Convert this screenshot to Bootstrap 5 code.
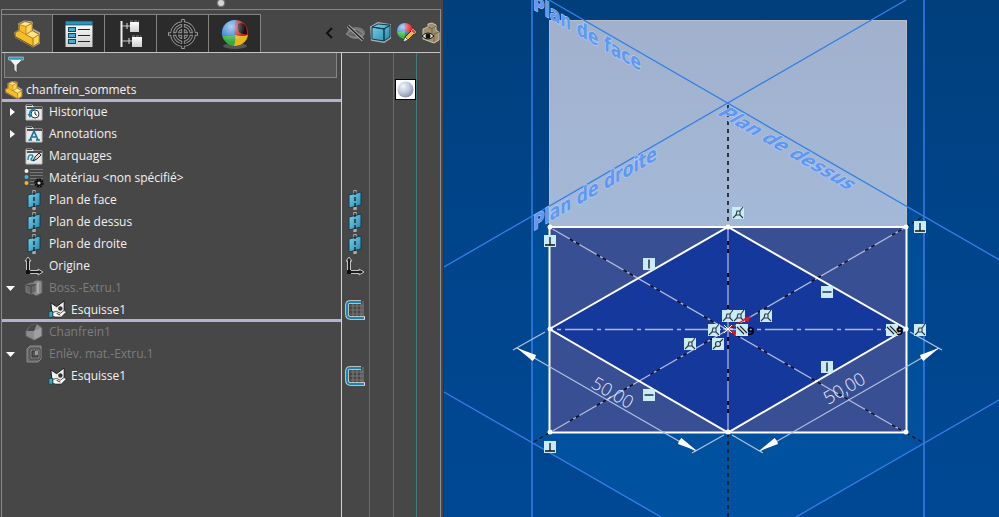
<!DOCTYPE html>
<html lang="fr">
<head>
<meta charset="utf-8">
<meta name="viewport" content="width=device-width, initial-scale=1">
<title>chanfrein_sommets</title>
<link href="https://cdn.jsdelivr.net/npm/bootstrap@5.3.0/dist/css/bootstrap.min.css" rel="stylesheet">
<style>
  body { font-family: "Open Sans", "Noto Sans", sans-serif; font-size: 12px; line-height: 16px; background: #474747; color: #f2f2f2; }
  svg { display: block; flex: none; }
  button { font: inherit; color: inherit; }
  .side-panel { flex: 0 0 444px; background: #474747; border-right: 1px solid #2f3438; padding: 0 2px 0 1px; }
  .top-strip { height: 10px; border-bottom: 1px solid #858585; }
  .grip { width: 6px; height: 6px; border-radius: 50%; background: #d6d6d6; box-shadow: 0 0 1px 1px #808080; }
  .panel-frame { border-left: 1px solid #8a8a8a; border-right: 1px solid #8f8f8f; }
  .tab-strip { padding-top: 4px; border-bottom: 1px solid #c4c4c4; }
  .tool-tab { width: 52px; height: 38px; padding: 0; border: 1px solid #858585; border-width: 1px 1px 0 0; background: #2b2b2b; display: flex; align-items: center; justify-content: center; }
  .tool-tab.active { width: 51px; background: #474747; }
  .icon-btn { padding: 0; border: 0; background: none; }
  .tree-pane { flex: 1 1 0; border-right: 1px solid #d5d5d5; min-width: 0; }
  .filter-box { height: 25px; margin: 0 4px 2px 2px; background: #555; border: 1px solid #858585; border-top: 0; padding-left: 3px; }
  .filter-box input { background: none; border: 0; outline: 0; color: inherit; min-width: 0; }
  .tree-row { height: 22px; padding-bottom: 2px; white-space: nowrap; }
  .tree-row.ruled { padding-bottom: 0; border-bottom: 3px solid #b4b2cf; }
  .toggle { width: 16px; height: 18px; flex: none; display: flex; align-items: center; padding-left: 4px; }
  .tree-icon { width: 22px; margin: 0 4px 0 5px; flex: none; display: flex; justify-content: center; }
  .child .tree-icon { margin: 0 3px 0 28px; }
  .root .tree-icon { margin: 0 2px 0 0; }
  .off { color: #7d7d7d; }
  .columns-pane { flex: 0 0 98px; }
  .columns-row { height: 22px; }
  .columns-row span { flex: 1 1 24px; border-left: 1px solid #3f7c7a; padding-bottom: 3px; display: flex; align-items: center; justify-content: center; }
  .columns-row span:first-child { flex: 0 0 27px; border-left: 0; padding-right: 2px; }
  .columns-row.head { height: 27px; }
  .swatch { width: 21px; height: 21px; background: #fff; border: 1px solid #000; }
  .scene { flex: 1 1 0; min-width: 0; background: linear-gradient(#003f7c, #00458c 50%, #004894); }
  .plane-name { font-family: "DejaVu Sans", sans-serif; font-weight: 700; font-size: 18px; fill: #5f98f2; stroke: #bdd0f0; stroke-width: 1px; paint-order: stroke; }
  .dim-value { font-family: "Open Sans", sans-serif; font-weight: 300; font-size: 18px; fill: #e6ebf8; }
  .nine { font-family: "DejaVu Sans", sans-serif; font-weight: 700; font-size: 11px; fill: #000; }
</style>
<script src="https://cdn.jsdelivr.net/npm/bootstrap@5.3.0/dist/js/bootstrap.bundle.min.js"></script>
</head>
<body class="vh-100 d-flex overflow-hidden">

<svg width="0" height="0" class="position-absolute" aria-hidden="true">
  <defs>
    <linearGradient id="gBlue" x1="0" y1="0" x2="1" y2="1"><stop offset="0" stop-color="#7fd0ea"/><stop offset="1" stop-color="#2687ad"/></linearGradient>
    <linearGradient id="gWhite" x1="0" y1="0" x2="0" y2="1"><stop offset="0" stop-color="#fff"/><stop offset="1" stop-color="#cfcfcf"/></linearGradient>
    <radialGradient id="gBall" cx=".35" cy=".3" r=".75"><stop offset="0" stop-color="#f1f4fb"/><stop offset=".5" stop-color="#c3cbdf"/><stop offset="1" stop-color="#8790a8"/></radialGradient>
    <radialGradient id="gShine" cx=".35" cy=".25" r=".6"><stop offset="0" stop-color="#fff" stop-opacity=".65"/><stop offset="1" stop-color="#fff" stop-opacity="0"/></radialGradient>
    <symbol id="part" viewBox="0 0 28 28">
      <path d="M1 13 5 10.500 5 4 11 1 18 1.500 20 3V9L27 13V24L20 28 2 18Z" fill="#d5d5d5" opacity=".7"/>
      <path d="M2 13 6 11V5L12 2 19 4V11L26 15V23L20 27 2 17Z" fill="#f6bd2b" stroke="#6b4c0a"/>
      <path d="M6 5 12 2 19 4 13 7ZM13 15 19 11 26 15 20 19Z" fill="#ffe48b" stroke="#a5761a" stroke-width=".7"/>
      <path d="M13 7 19 4V11L13 15ZM20 19 26 15V23L20 27Z" fill="#ffd75a" stroke="#a5761a" stroke-width=".7"/>
      <path d="M2 13 6 11 13 15 20 19V27" fill="none" stroke="#b98415" stroke-width=".8"/>
    </symbol>
    <symbol id="plane" viewBox="0 0 16 20">
      <path d="M8 1V19" stroke="#aaa" stroke-width="3.500" stroke-linecap="round"/>
      <path d="M2 5 14 2V15L2 18Z" fill="url(#gBlue)" stroke="#0c4157"/>
      <path d="M8 1V19" stroke="#111" stroke-width="1.200" stroke-dasharray="4 2"/>
    </symbol>
    <symbol id="origin" viewBox="0 0 20 20">
      <path d="M4 17V4M4 16H17" fill="none" stroke="#c6c6c6" stroke-width="4"/>
      <path d="M4 1 7 5H1ZM19 16 14 13V19Z" fill="#222" stroke="#c6c6c6"/>
      <path d="M4 16V4M3 16H17" fill="none" stroke="#1c1c1c" stroke-width="2"/>
      <rect x="2" y="14" width="4" height="4" fill="#111"/>
    </symbol>
    <symbol id="folder" viewBox="0 0 18 18">
      <path d="M1 17V2H7L9 4H17V17Z" fill="#e9e9e9" stroke="#bdbdbd"/><path d="M2 5H17" stroke="#222" stroke-width="1.500"/><path d="M1.500 2.500H7" stroke="#444"/>
    </symbol>
    <symbol id="sketch" viewBox="0 0 20 20">
      <path d="M3 3 9 7 17 1V13L10 16 4 12Z" fill="#f1f1f1" stroke="#161616"/>
      <circle cx="13" cy="9" r="2.300" fill="#333"/>
      <path d="M5 13 9 12 13 14 17 11 19 13 14 18 8 18 5 17Z" fill="#fff" stroke="#222" stroke-width=".8"/>
      <path d="M9 14 13 16" stroke="#222"/><rect x="1" y="12" width="4" height="6" fill="#3aa3c8" stroke="#123f54" stroke-width=".7"/>
    </symbol>
    <symbol id="sketchGrid" viewBox="0 0 20 20">
      <path d="M8 4V17M12 4V17M16 4V17M18 1V17M5 6H19M5 10H19M5 14H19" stroke="#757575" stroke-width="1.200"/>
      <path d="M16 2H5Q2 2 2 5V14Q2 18 6 18H20" fill="none" stroke="#dfe6e8" stroke-width="3.500"/>
      <path d="M16 2H5Q2 2 2 5V14Q2 18 6 18H19" fill="none" stroke="#1c83ab" stroke-width="2"/>
    </symbol>
    <g id="tile"><rect x="-6" y="-6" width="12" height="12" fill="#c9ecfb"/></g>
    <g id="perp"><use href="#tile"/><path d="M0-4V4M-5 4H5" stroke="#111" stroke-width="1.300"/></g>
    <g id="vert"><use href="#tile"/><path d="M0-4.500V4.500" stroke="#111" stroke-width="1.300"/></g>
    <g id="horiz"><use href="#tile"/><path d="M-4.500 0H4.500" stroke="#111" stroke-width="1.300"/></g>
    <g id="coin"><use href="#tile"/><path d="M-5 5-2 2M2-2 5-6M-2 2-1-2H2V2ZM2 2 5 5" fill="none" stroke="#30373a" stroke-width="1.100"/></g>
    <g id="mid"><use href="#tile"/><path d="M-5 5-2 2M2-2 5-5" stroke="#30373a" stroke-width="1.200"/><circle r="2.500" fill="none" stroke="#30373a" stroke-width="1.200"/></g>
    <g id="para"><use href="#tile"/><path d="M-5-3 2 4M-2-4 5 3" stroke="#222" stroke-width="1.100"/></g>
  </defs>
</svg>

<aside class="side-panel d-flex flex-column">
  <div class="top-strip d-flex justify-content-center"><span class="grip"></span></div>
  <div class="panel-frame d-flex flex-column flex-grow-1">
    <div class="tab-strip d-flex align-items-center">
      <div class="d-flex" role="tablist">
        <button class="tool-tab active" type="button" role="tab" aria-selected="true" aria-label="Arbre de création"><svg width="28" height="29"><use href="#part"/></svg></button>
        <button class="tool-tab" type="button" role="tab" aria-label="Propriétés">
          <svg width="28" height="28" viewBox="0 0 28 28"><rect x=".5" y="1" width="27" height="26" fill="url(#gWhite)"/><rect x=".5" y="1" width="27" height="4" fill="#2b93b8" stroke="#0e465a" stroke-width=".7"/><g fill="#45aed0" stroke="#0e465a"><rect x="3.500" y="7.500" width="7" height="4"/><rect x="3.500" y="13.500" width="7" height="4"/><rect x="3.500" y="19.500" width="7" height="4"/></g><path d="M13 9.500H25M13 15.500H25M13 21.500H25" stroke="#222"/></svg></button>
        <button class="tool-tab" type="button" role="tab" aria-label="Configurations">
          <svg width="24" height="28" viewBox="0 0 24 28"><path d="M2.500 1V27" stroke="#eee" stroke-width="2"/><path d="M3 6H11M3 21H13" stroke="#ccc"/><path d="M8 3V9M10 18V24" stroke="#ddd"/><rect x="11" y="2" width="9" height="10" fill="url(#gWhite)"/><rect x="13" y="17" width="10" height="10" fill="url(#gWhite)"/><path d="M11 1H20M13 16H22" stroke="#888" stroke-dasharray="3 1"/></svg></button>
        <button class="tool-tab" type="button" role="tab" aria-label="Cotations">
          <svg width="32" height="32" viewBox="0 0 32 32" fill="none"><g stroke="#999" stroke-width="3.500"><circle cx="16" cy="16" r="11"/><circle cx="16" cy="16" r="6"/><path d="M16 1V31M1 16H31"/></g><g stroke="#222" stroke-width="1.700"><circle cx="16" cy="16" r="11"/><circle cx="16" cy="16" r="6"/><path d="M16 2V30M2 16H30"/></g></svg></button>
        <button class="tool-tab" type="button" role="tab" aria-label="Apparences">
          <svg width="30" height="32" viewBox="0 0 30 32"><ellipse cx="15" cy="28" rx="12" ry="3" fill="#555"/><path d="M15 17Q14 8 17 2A13 13 0 0 0 2 17Q8 19 15 17Z" fill="#2275cf"/><path d="M15 17Q14 8 17 2A13 13 0 0 1 28 17Q22 19 15 17Z" fill="#c31a1e"/><path d="M18 6Q23 3 26 9L27 16Q22 17 19 14Q17 10 18 6Z" fill="#0c0405"/><path d="M15 17Q8 19 2 17A13 13 0 0 0 14 28Q16 22 15 17Z" fill="#2eae3c"/><path d="M15 17Q22 19 28 17A13 13 0 0 1 14 28Q16 22 15 17Z" fill="#e9b51c"/><circle cx="15" cy="15" r="13" fill="url(#gShine)"/></svg></button>
      </div>
      <div class="d-flex align-items-center ms-auto gap-1">
        <button class="icon-btn me-2" type="button" aria-label="Réduire"><svg width="8" height="12" viewBox="0 0 8 12"><path d="M7 1 2 6 7 11" fill="none" stroke="#111" stroke-width="2"/></svg></button>
        <button class="icon-btn" type="button" aria-label="Masquer"><svg width="21" height="20" viewBox="0 0 21 20"><ellipse cx="11" cy="10" rx="9" ry="6" fill="#777"/><path d="M1 11Q10 2 19 11Q10 18 1 11Z" fill="#696969" stroke="#8d8d8d"/><circle cx="11" cy="10" r="3" fill="#555"/><path d="M3 3 18 17" stroke="#aaa" stroke-width="3.500"/><path d="M3 3 18 17" stroke="#222" stroke-width="1.500"/></svg></button>
        <button class="icon-btn" type="button" aria-label="Mode d'affichage"><svg width="22" height="22" viewBox="0 0 22 22"><path d="M1 5 8 1 20 3V16L14 20 2 18Z" fill="#c9d3d6" stroke="#aaa" stroke-width="2"/><path d="M2 5 14 7 20 3 8 2ZM2 5V17L14 19V7ZM14 7V19L20 15V3Z" fill="url(#gBlue)" stroke="#0d3c4d"/></svg></button>
        <button class="icon-btn" type="button" aria-label="Apparence"><svg width="21" height="22" viewBox="0 0 21 22"><path d="M9 9V1A8 8 0 0 0 1 10Z" fill="#2b7ce0"/><path d="M9 9V1A8 8 0 0 1 17 10Z" fill="#ed2024"/><path d="M9 9 1 10A8 8 0 0 0 9 17Z" fill="#37b845"/><path d="M9 9H17A8 8 0 0 1 9 17Z" fill="#2d62cc"/><circle cx="9" cy="9" r="8" fill="url(#gShine)"/><path d="M7 20 9 15 17 7 20 10 12 18Z" fill="#f7b634" stroke="#333"/><path d="M15 9 17 7 20 10 18 12Z" fill="#e34848" stroke="#eee" stroke-width=".5"/><path d="M7 20 9 15 12 18Z" fill="#eee" stroke="#333" stroke-width=".6"/></svg></button>
        <button class="icon-btn" type="button" aria-label="Transparence"><svg width="19" height="22" viewBox="0 0 19 22"><path d="M2 12V7L7 5V2L11 1 15 3V8L18 10V18L13 21 2 17Z" fill="#a08f6c" stroke="#c9c3b5"/><path d="M7 5 11 7V12M11 7 15 4M13 12 18 10M13 12V20" fill="none" stroke="#726447"/><path d="M1 14Q7 8 13 14Q7 20 1 14Z" fill="#eee" stroke="#111"/><circle cx="7" cy="14" r="2.500" fill="#111"/></svg></button>
      </div>
    </div>

    <div class="d-flex flex-grow-1">
      <div class="tree-pane">
        <div class="filter-box d-flex align-items-center gap-1">
          <svg width="16" height="18" viewBox="0 0 16 18"><path d="M1 3 6 9V14L9 17V9L15 3Z" fill="url(#gWhite)" stroke="#333" stroke-width=".6"/><rect x="0" y="1" width="16" height="3" rx="1" fill="#2d9cc4" stroke="#b7dbe6" stroke-width=".6"/></svg>
          <input class="flex-grow-1" type="text" aria-label="Filtrer l'arbre">
        </div>
        <ul class="list-unstyled m-0">
          <li class="tree-row ruled root d-flex align-items-center"><span class="tree-icon"><svg width="19" height="20"><use href="#part"/></svg></span>chanfrein_sommets</li>
          <li class="tree-row d-flex align-items-center"><button class="icon-btn toggle ps-2" type="button" aria-label="Développer"><svg width="5" height="8"><path d="M0 0 5 4 0 8Z" fill="#fff"/></svg></button><span class="tree-icon"><svg width="18" height="18" viewBox="0 0 18 18"><use href="#folder"/><circle cx="10" cy="11" r="4" fill="#fff" stroke="#333"/><path d="M10 8.500V11L12 12.500" fill="none" stroke="#222"/><path d="M5 13A5 5 0 0 1 10 6" fill="none" stroke="#1785ac" stroke-width="1.600"/><path d="M2.500 11H7.500L5 15Z" fill="#1785ac"/></svg></span>Historique</li>
          <li class="tree-row d-flex align-items-center"><button class="icon-btn toggle ps-2" type="button" aria-label="Développer"><svg width="5" height="8"><path d="M0 0 5 4 0 8Z" fill="#fff"/></svg></button><span class="tree-icon"><svg width="18" height="18" viewBox="0 0 18 18"><use href="#folder"/><path d="M5 15 9 6 13 15M6.500 12H12M3.500 15H7M11 15H15" fill="none" stroke="#14759a" stroke-width="1.700"/></svg></span>Annotations</li>
          <li class="tree-row d-flex align-items-center"><span class="toggle"></span><span class="tree-icon"><svg width="18" height="18" viewBox="0 0 18 18"><use href="#folder"/><path d="M3 13Q3 7 7 8Q9 9 6 12Q6 14 9 13" fill="none" stroke="#1785ac" stroke-width="1.400"/><path d="M8 14 10 10 14 6 16 8 12 12Z" fill="#ddd" stroke="#222"/></svg></span>Marquages</li>
          <li class="tree-row d-flex align-items-center"><span class="toggle"></span><span class="tree-icon"><svg width="20" height="20" viewBox="0 0 20 20"><circle cx="2.500" cy="3" r="2" fill="#eee"/><circle cx="2.500" cy="9" r="2" fill="#43b4df"/><circle cx="2.500" cy="15" r="2" fill="#f3b61f"/><path d="M6 3H19M6 9H19M6 15H12" stroke="#aaa" stroke-width="3"/><path d="M6 3H19M6 9H19M6 15H12" stroke="#222" stroke-width="1.500"/><circle cx="15" cy="15" r="3.500" fill="#ccc" stroke="#111" stroke-width="2.500" stroke-dasharray="2 .7"/><circle cx="15" cy="15" r="2.500" fill="none" stroke="#111" stroke-width="1.800"/></svg></span>Matériau &lt;non spécifié&gt;</li>
          <li class="tree-row d-flex align-items-center"><span class="toggle"></span><span class="tree-icon"><svg width="16" height="20"><use href="#plane"/></svg></span>Plan de face</li>
          <li class="tree-row d-flex align-items-center"><span class="toggle"></span><span class="tree-icon"><svg width="16" height="20"><use href="#plane"/></svg></span>Plan de dessus</li>
          <li class="tree-row d-flex align-items-center"><span class="toggle"></span><span class="tree-icon"><svg width="16" height="20"><use href="#plane"/></svg></span>Plan de droite</li>
          <li class="tree-row d-flex align-items-center"><span class="toggle"></span><span class="tree-icon"><svg width="20" height="20"><use href="#origin"/></svg></span>Origine</li>
          <li class="tree-row off d-flex align-items-center"><button class="icon-btn toggle" type="button" aria-label="Réduire"><svg width="9" height="5"><path d="M0 0H9L4.500 5Z" fill="#fff"/></svg></button><span class="tree-icon"><svg width="18" height="18" viewBox="0 0 18 18"><path d="M8 3 12 1 17 2V14L11 17 8 15Z" fill="#8b8b8b" stroke="#5d5d5d"/><path d="M12 4 14 3V14L12 15Z" fill="#aaa"/><path d="M1 6 6 4 11 5V13L6 15 1 13Z" fill="#666" stroke="#8f8f8f" stroke-width=".7"/><path d="M1 6 6 7 11 5M6 7V15" fill="none" stroke="#444"/></svg></span>Boss.-Extru.1</li>
          <li class="tree-row ruled child d-flex align-items-center"><span class="toggle"></span><span class="tree-icon"><svg width="19" height="19"><use href="#sketch"/></svg></span>Esquisse1</li>
          <li class="tree-row off d-flex align-items-center"><span class="toggle"></span><span class="tree-icon"><svg width="18" height="18" viewBox="0 0 18 18"><path d="M1 8 6 2 12 1 17 5V13L9 17 1 13Z" fill="#8c8c8c" stroke="#696969"/><path d="M6 2 12 1 9 8 2 8Z" fill="#484848"/><path d="M9 8 16 5V13L9 17Z" fill="#a0a0a0"/></svg></span>Chanfrein1</li>
          <li class="tree-row off d-flex align-items-center"><button class="icon-btn toggle" type="button" aria-label="Réduire"><svg width="9" height="5"><path d="M0 0H9L4.500 5Z" fill="#fff"/></svg></button><span class="tree-icon"><svg width="16" height="18" viewBox="0 0 16 18"><path d="M1 4 4 1H15V14L12 17H1Z" fill="#686868" stroke="#8e8e8e"/><path d="M4 4H14V14H4Z" fill="#8a8a8a" stroke="#444"/><path d="M6 6H12V12H6Z" fill="#555" stroke="#333"/><path d="M9 6H12V10H9Z" fill="#999"/></svg></span>Enlèv. mat.-Extru.1</li>
          <li class="tree-row child d-flex align-items-center"><span class="toggle"></span><span class="tree-icon"><svg width="19" height="19"><use href="#sketch"/></svg></span>Esquisse1</li>
        </ul>
      </div>

      <div class="columns-pane d-flex flex-column">
        <div class="columns-row head d-flex"><span></span><span></span><span></span><span></span></div>
        <div class="columns-row d-flex"><span></span><span></span><span><svg class="swatch" viewBox="0 0 19 19"><circle cx="9.500" cy="9.500" r="8" fill="url(#gBall)"/></svg></span><span></span></div>
        <div class="columns-row d-flex"><span></span><span></span><span></span><span></span></div>
        <div class="columns-row d-flex"><span></span><span></span><span></span><span></span></div>
        <div class="columns-row d-flex"><span></span><span></span><span></span><span></span></div>
        <div class="columns-row d-flex"><span></span><span></span><span></span><span></span></div>
        <div class="columns-row d-flex"><span><svg width="16" height="20"><use href="#plane"/></svg></span><span></span><span></span><span></span></div>
        <div class="columns-row d-flex"><span><svg width="16" height="20"><use href="#plane"/></svg></span><span></span><span></span><span></span></div>
        <div class="columns-row d-flex"><span><svg width="16" height="20"><use href="#plane"/></svg></span><span></span><span></span><span></span></div>
        <div class="columns-row d-flex"><span><svg width="20" height="20"><use href="#origin"/></svg></span><span></span><span></span><span></span></div>
        <div class="columns-row d-flex"><span></span><span></span><span></span><span></span></div>
        <div class="columns-row d-flex"><span><svg width="20" height="20"><use href="#sketchGrid"/></svg></span><span></span><span></span><span></span></div>
        <div class="columns-row d-flex"><span></span><span></span><span></span><span></span></div>
        <div class="columns-row d-flex"><span></span><span></span><span></span><span></span></div>
        <div class="columns-row d-flex"><span><svg width="20" height="20"><use href="#sketchGrid"/></svg></span><span></span><span></span><span></span></div>
        <div class="columns-row d-flex flex-grow-1"><span></span><span></span><span></span><span></span></div>
      </div>
    </div>
  </div>
</aside>

<main class="scene">
  <svg class="w-100 h-100" viewBox="444 0 555 517" preserveAspectRatio="xMidYMid slice" role="img" aria-label="Esquisse isométrique">
    <defs>
      <linearGradient id="gHex" x1="0" y1="0" x2="0" y2="1"><stop offset="0" stop-color="#004a92"/><stop offset="1" stop-color="#0053a3"/></linearGradient>
      <linearGradient id="gTop" x1="0" y1="0" x2="0" y2="1"><stop offset="0" stop-color="#a1b1cd"/><stop offset="1" stop-color="#a4b9d8"/></linearGradient>
    </defs>
    <path d="M728 103 924 216V443L728 556 532 443V216Z" fill="url(#gHex)"/>
    <rect x="549" y="20" width="358" height="207" fill="url(#gTop)"/>
    <path d="M549.500 227V20.500H906.500V227" fill="none" stroke="#bdbdc4"/>
    <rect x="549" y="227" width="358" height="206" fill="#384f94"/>
    <path d="M728 227 906 329 728 433 549 329Z" fill="#15389c"/>
    <g stroke="#3280e8" stroke-width="1.300" fill="none">
      <path d="M532 0V517M924 0V517" stroke-width="1.500"/>
      <path d="M549 0 999 259.600M906 0 444 267M444 392 661 517M999 400 796 517"/>
    </g>
    <path d="M728 105V227M728 433V517" stroke="#10151c" stroke-width="1.600" stroke-dasharray="4 4"/>
    <path d="M549 433 532 443M906 433 924 443M906 227 924 216" stroke="#061020" stroke-width="1.300" stroke-dasharray="4 3"/>
    <g fill="none">
      <path d="M549 227 906 433M549 433 906 227" stroke="#b4badb" stroke-width="1.300"/>
      <path d="M549 227 906 433M549 433 906 227" stroke="#080c22" stroke-width="1.600" stroke-dasharray="4 3 4 20" stroke-dashoffset="-24"/>
      <path d="M728 227V433" stroke="#9a9fd0" stroke-width="1.500"/>
      <path d="M728 227V433" stroke="#080c22" stroke-width="2" stroke-dasharray="4 4 4 20" stroke-dashoffset="-14"/>
      <path d="M549 329.500H906" stroke="#b4b5e6" stroke-width="1.400" stroke-dasharray="28 4 4 4" stroke-dashoffset="24"/>
    </g>
    <g stroke="#fff" fill="none" stroke-width="2">
      <path d="M549.500 227H906.500V432.500H549.500Z"/>
      <path d="M549.500 329 728 227 906.500 329 728 432.500Z"/>
    </g>
    <g fill="#fff"><circle cx="550" cy="227" r="2.500"/><circle cx="728" cy="227" r="2.500"/><circle cx="906" cy="227" r="2.500"/><circle cx="550" cy="329" r="2.500"/><circle cx="906" cy="329" r="2.500"/><circle cx="550" cy="432" r="2.500"/><circle cx="728" cy="432" r="2.500"/><circle cx="906" cy="432" r="2.500"/></g>

    <g stroke="#b3c2e0" stroke-width="1.200" fill="none">
      <path d="M545 332 513 350M724 435 692 453M517 348 696 451"/>
      <path d="M910 332 942 350M732 435 763 453M939 348 760 451"/>
    </g>
    <path d="M517 348 536 355 535 358 532.600 361ZM697 451 678 444 679 441 681.400 438ZM939 348 920 355 921 358 923.400 361ZM759 451 778 444 777 441 774.600 438Z" fill="#fff"/>

    <text class="plane-name" transform="translate(533 9) rotate(30) skewX(30)">Plan de face</text>
    <text class="plane-name" transform="translate(533 231) rotate(-30) skewX(-30)">Plan de droite</text>
    <text class="plane-name" transform="translate(716 114) rotate(30) skewX(-30)">Plan de dessus</text>
    <text class="dim-value" transform="translate(590 387) rotate(30)">50,00</text>
    <text class="dim-value" transform="translate(828 405) rotate(-30)">50,00</text>

    <use href="#perp" x="550" y="241"/><use href="#perp" x="550" y="447"/><use href="#perp" x="920" y="227"/>
    <use href="#vert" x="649" y="264"/><use href="#vert" x="827" y="367"/>
    <use href="#horiz" x="827" y="292"/><use href="#horiz" x="649" y="395"/>
    <use href="#coin" x="738" y="213"/><use href="#coin" x="728" y="316"/><use href="#coin" x="739" y="316"/><use href="#coin" x="766" y="316"/>
    <use href="#coin" x="714" y="330"/><use href="#coin" x="690" y="344"/><use href="#mid" x="718" y="344"/><use href="#coin" x="920" y="330"/>
    <path d="M728 329 746 319M728 329 738 335" stroke="#f01018" stroke-width="1.200"/>
    <path d="M751 316 748 322 743 319ZM730 331 737 331 735 336Z" fill="#f80d12"/>
    <use href="#para" x="742" y="330"/><use href="#para" x="892" y="330"/>
    <path d="M724 325 732 333M732 325 724 333M723 329H733" stroke="#fff" stroke-width="1"/>
    <text class="nine" x="747" y="335">9</text><text class="nine" x="896" y="335">9</text>
  </svg>
</main>
</body>
</html>
